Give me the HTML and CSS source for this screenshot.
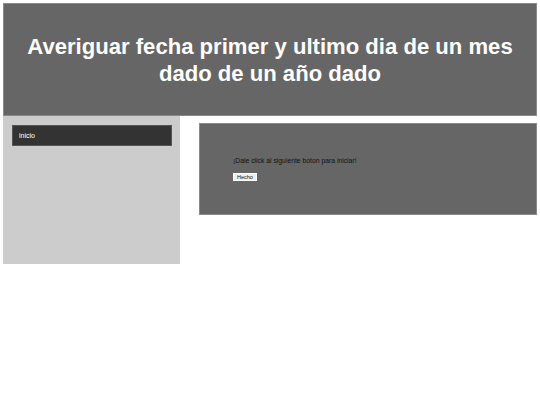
FILE: index.html
```html
<!DOCTYPE html>
<html lang="es">
<head>
<meta charset="utf-8">
<title>Fechas</title>
<link rel="stylesheet" href="styles.css">
</head>
<body>
<div class="page">
  <header class="header">
    <h1 class="title">Averiguar fecha primer y ultimo dia de un mes dado de un año dado</h1>
  </header>
  <div class="body-row">
    <aside class="sidebar">
      <div class="nav-item">inicio</div>
    </aside>
    <main class="main">
      <p class="prompt">¡Dale click al siguiente boton para iniciar!</p>
      <button class="btn" type="button">Hecho</button>
    </main>
  </div>
</div>
</body>
</html>
```

FILE: styles.css
```css
html, body {
  margin: 0;
  padding: 0;
  background: #ffffff;
  font-family: "Liberation Sans", Arial, sans-serif;
}
.page {
  padding: 3px;
}
.header {
  box-sizing: border-box;
  height: 113px;
  background: #666666;
  border: 1px solid #8a8a8a;
  display: flex;
  align-items: center;
  justify-content: center;
}
.title {
  margin: 0;
  color: #ffffff;
  font-size: 22.1px;
  line-height: 27px;
  font-weight: bold;
  text-align: center;
  padding: 0 10px;
}
.body-row {
  display: flex;
  align-items: flex-start;
}
.sidebar {
  box-sizing: border-box;
  width: 177px;
  height: 148px;
  background: #cccccc;
  padding: 9px 8px 0 9px;
}
.nav-item {
  box-sizing: border-box;
  height: 21px;
  background: #333333;
  border: 1px solid #555555;
  color: #ffffff;
  font-size: 7px;
  line-height: 19px;
  padding-left: 6px;
}
.main {
  box-sizing: border-box;
  flex: 1;
  margin: 7px 0 0 19px;
  height: 92px;
  background: #666666;
  border: 1px solid #8a8a8a;
  padding: 33px 0 0 33px;
}
.prompt {
  margin: 0 0 8px 0;
  font-size: 6.8px;
  line-height: 8px;
  color: #111111;
}
.btn {
  display: block;
  margin: 0;
  height: 8px;
  padding: 0 3px;
  font-family: "Liberation Sans", Arial, sans-serif;
  font-size: 5.5px;
  line-height: 6px;
  color: #111111;
  background: #efefef;
  border: 1px solid #ffffff;
  border-radius: 0;
}
```
